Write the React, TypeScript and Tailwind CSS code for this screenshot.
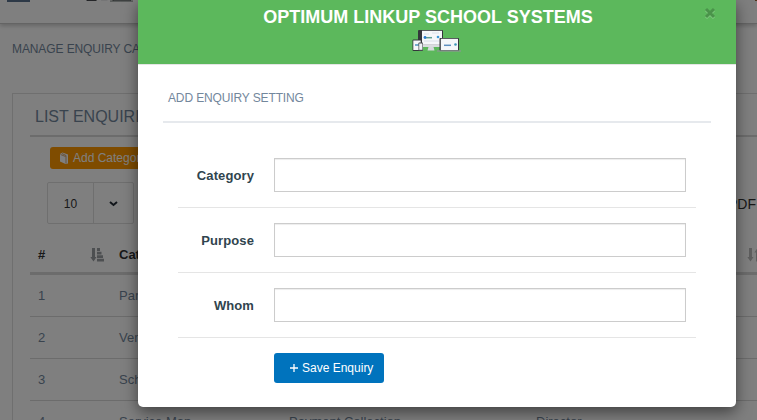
import React from "react";

function Devices({ className }: { className?: string }) {
  return (
    <svg viewBox="0 0 50 24" className={className}>
      <rect x="6" y="1" width="25" height="17" rx="1" fill="#34363b" />
      <rect x="10" y="1.800" width="20" height="14" fill="#f5f7fa" />
      <path d="M6.500 15.800h24v2.200h-24z" fill="#d9dcdf" />
      <path d="M16.500 18h5l1 3.500h-7z" fill="#d5d8dc" />
      <path d="M13 8.700h7" stroke="#5f9f93" strokeWidth="1.500" />
      <circle cx="13" cy="8.500" r="1.400" fill="#2a7bcf" />
      <circle cx="26" cy="8" r="1.300" fill="#3f98d6" />
      <path d="M12 5h5M20 4h7M12 12h15" stroke="#d3dbe6" strokeWidth=".8" />
      <rect x=".5" y="10.500" width="9" height="11.500" rx="1" fill="#34363b" />
      <rect x="1.300" y="11.500" width="7.400" height="9.500" fill="#f4f6f8" />
      <path d="M3 16h4" stroke="#4d90bd" strokeWidth="1.500" />
      <rect x="6.500" y="13.500" width="4.500" height="8.500" rx=".7" fill="#4a4c50" />
      <rect x="7.200" y="14.500" width="3.200" height="6.300" fill="#eef2f6" />
      <rect x="27.500" y="9" width="19.500" height="13" rx=".8" fill="#34363b" />
      <rect x="28.800" y="9.800" width="17.200" height="11.400" fill="#f5f7fa" />
      <path d="M32 16.300h7" stroke="#5e8fc0" strokeWidth="1.500" />
      <circle cx="43.500" cy="15.500" r="1.300" fill="#3d97b8" />
      <path d="M25 22h24" stroke="#8c9592" strokeWidth="1.200" />
    </svg>
  );
}

function SortAsc() {
  return (
    <svg width="14" height="14" viewBox="0 0 14 14" fill="#9b9ea3">
      <path d="M2 0h3v9h1.500L3.500 13.500.3 9H2zM7 0h3v3H7zM7 3.700h4.500v2.800H7zM7 7.200h6v2.800H7zM7 10.700h7v2.800H7z" />
    </svg>
  );
}

function SortBoth() {
  return (
    <svg width="14" height="14" viewBox="0 0 14 14" fill="#bdbdbd">
      <path d="M2 0h3v9h1.500L3.500 13.500.3 9H2zM9 13.500h3v-9h1.500L10.500 0 7.300 4.500H9z" />
    </svg>
  );
}

const rows = [
  ["1", "Parent", "", ""],
  ["2", "Vendor", "", ""],
  ["3", "School", "", ""],
  ["4", "Service Man", "Payment Collection", "Director"],
];

const grid = "grid grid-cols-[81px_170px_247px_1fr] pl-2";

function Page() {
  return (
    <div className="h-[420px] overflow-hidden bg-white text-[#73879c]">
      <header className="relative flex h-[24px] items-start border-b border-[#c8c8c8] bg-white shadow-[0_2px_4px_rgba(0,0,0,0.2)]">
        <div className="ml-[7px] h-[2px] w-[23px] bg-[#5a738e]" />
        <div className="ml-[56px] h-[3px] w-[48px] overflow-hidden">
          <Devices className="-mt-[20px] h-[23px] w-[48px]" />
        </div>
        <div className="ml-auto h-px w-[2px] bg-[#a26530]" />
      </header>
      <div className="mt-[17px] pl-3 text-[12px] leading-4 tracking-[-0.1px]">MANAGE ENQUIRY CATEGORY</div>
      <section className="mt-[36px] ml-3 h-[400px] w-[900px] border border-[#dedede] pl-[17px]">
        <h2 className="h-[43px] border-b-2 border-[#d9d9d9] pt-[11px] pl-[5px] text-[16px] leading-6">LIST ENQUIRIES</h2>
        <div className="mt-[10px] ml-5 flex h-[22px] w-[112px] items-center rounded-[3px] bg-[#ff9800] pl-[9px] text-[12px] whitespace-nowrap text-white">
          <svg width="11" height="12" viewBox="0 0 11 12" className="mr-[3px]">
            <path d="M1 2 3.500.5 9 2.500v9L6.500 12 1 9.500z" fill="white" />
            <path d="m3 1.500 4 2v8M1.500 2.500l5 2" stroke="#c18235" strokeWidth=".7" fill="none" />
          </svg>
          Add Category
        </div>
        <div className="mt-[13px] flex items-start">
          <div className="ml-[17px] flex h-[42px] w-[87px] rounded-[2px] border border-[#dedede] text-[12px] text-[#333]">
            <span className="flex w-[46px] items-center justify-center border-r border-[#dedede] pt-px">10</span>
            <span className="flex flex-1 items-center justify-center pt-px">
              <svg width="9" height="6" viewBox="0 0 9 6" fill="none" stroke="#222b35" strokeWidth="2">
                <path d="m1 1 3.500 3L8 1" />
              </svg>
            </span>
          </div>
          <span className="mt-[12px] ml-[594px] text-[14px] leading-5 text-[#333]">PDF</span>
        </div>
        <div className={grid + " h-[51px] border-b-[3px] border-[#d9d9d9] pt-[22px] text-[13px] font-bold leading-[18px] text-[#333]"}>
          <span className="flex">
            # <span className="mt-[2px] ml-[45px]"><SortAsc /></span>
          </span>
          <span>Category</span>
          <span>Purpose</span>
          <span className="flex">Whom<span className="mt-[2px] ml-[171px]"><SortBoth /></span></span>
        </div>
        {rows.map((row) => (
          <div key={row[0]} className={grid + " h-[42px] border-b border-[#d9d9d9] text-[13px] leading-[41px]"}>
            {row.map((cell, i) => <span key={i}>{cell}</span>)}
          </div>
        ))}
      </section>
    </div>
  );
}

function Modal() {
  return (
    <div className="absolute top-0 left-[138px] h-[407px] w-[598px] rounded-b-[5px] bg-white shadow-[0_5px_15px_rgba(0,0,0,0.5)]">
      <div className="relative flex h-[65px] flex-col items-center border-b border-[#e5e5e5] bg-[#5cb85c] bg-clip-padding pt-[5px]">
        <h1 className="pr-[18px] text-[18px] leading-6 font-bold whitespace-nowrap text-white">OPTIMUM LINKUP SCHOOL SYSTEMS</h1>
        <Devices className="h-[24px] w-[50px]" />
        <svg className="absolute top-[7px] right-[20px]" width="12" height="13" viewBox="0 0 12 13" fill="none">
          <path d="m2 3 8 8m0-8-8 8" stroke="#85cc85" strokeWidth="3" />
          <path d="m2 2 8 8m0-8-8 8" stroke="#4a934a" strokeWidth="3" />
        </svg>
      </div>
      <div className="mx-[25px] h-[58px] border-b-2 border-[#e6e9ed] pt-[25px] pl-[5px] text-[12px] leading-4 tracking-[-0.13px] text-[#73879c]">ADD ENQUIRY SETTING</div>
      <form className="mx-10 pt-5">
        {["Category", "Purpose", "Whom"].map((label) => (
          <div key={label} className="flex h-[65px] items-center border-b border-[#e5e5e5]">
            <label className="w-[76px] pt-[2px] text-right text-[13px] font-bold tracking-[0.1px] text-[#30444e]">{label}</label>
            <input className="ml-5 h-[34px] w-[412px] border border-[#ccc] bg-white px-3 shadow-[inset_0_1px_1px_rgba(0,0,0,0.075)]" />
          </div>
        ))}
        <button type="button" className="mt-[15px] ml-24 flex h-[30px] w-[110px] items-center rounded-[3px] bg-[#0073bd] pl-4 text-[12px] whitespace-nowrap text-white">
          <svg width="8" height="8" viewBox="0 0 8 8" className="mr-1">
            <path d="M0 4h8M4 0v8" stroke="white" strokeWidth="1.300" />
          </svg>
          Save Enquiry
        </button>
      </form>
    </div>
  );
}

export default function App() {
  return (
    <main className="relative h-[420px] w-[757px] overflow-hidden font-['Liberation_Sans',Arial,sans-serif]">
      <Page />
      <div className="absolute inset-0 bg-black/50" />
      <Modal />
    </main>
  );
}
